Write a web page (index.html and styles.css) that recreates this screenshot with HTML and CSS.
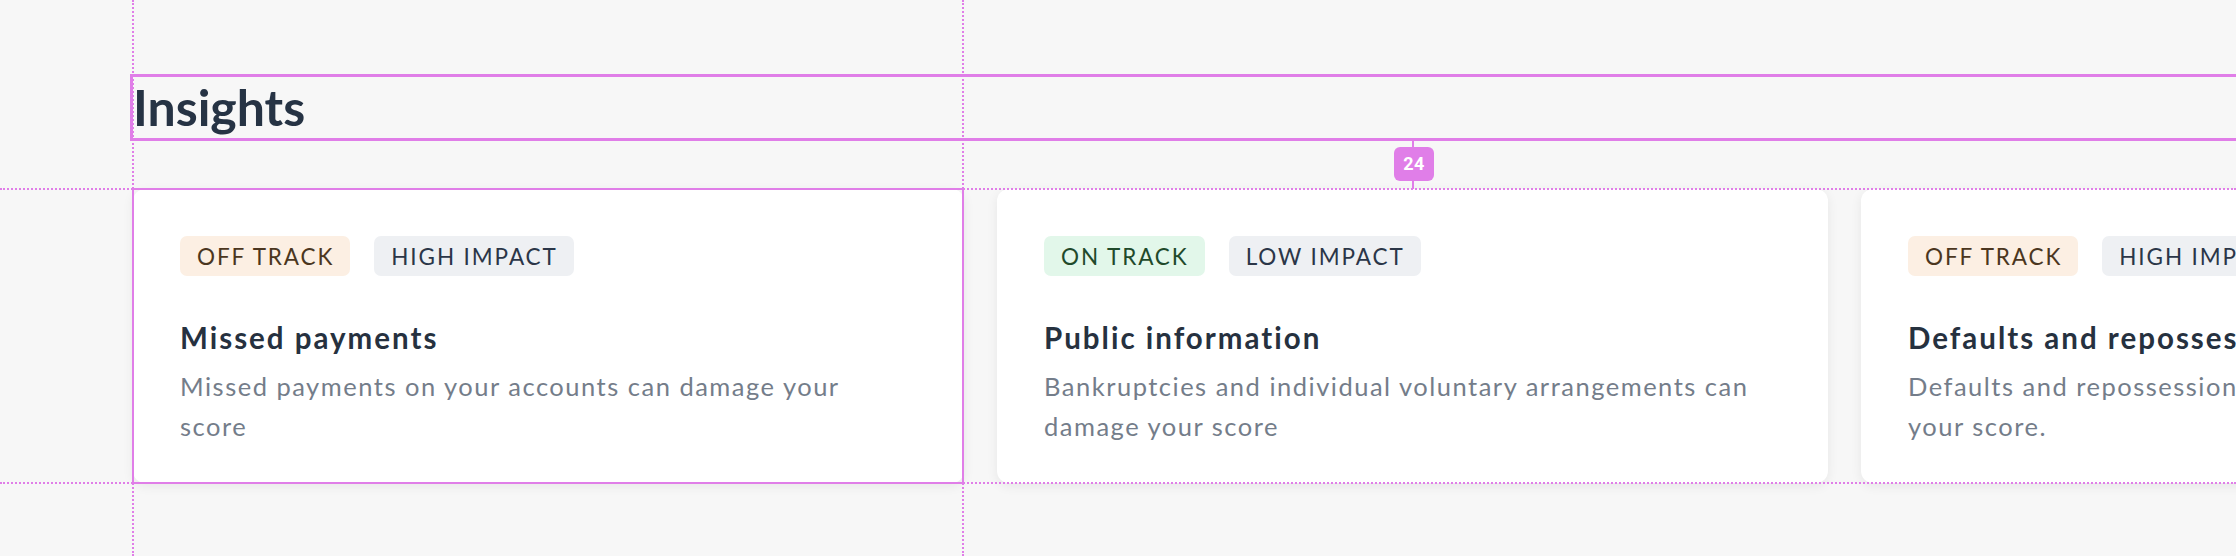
FILE: index.html
```html
<!DOCTYPE html>
<html lang="en">
<head>
<meta charset="utf-8">
<title>Insights</title>
<link rel="stylesheet" href="styles.css">
</head>
<body>
<div class="stage">
  <section class="insights">
    <h1 class="heading">Insights</h1>
    <div class="cards">
      <article class="card">
        <div class="tags">
          <span class="tag tag-off">Off track</span>
          <span class="tag tag-impact">High impact</span>
        </div>
        <h2 class="card-title">Missed payments</h2>
        <p class="card-desc">Missed payments on your accounts can damage your score</p>
      </article>
      <article class="card">
        <div class="tags">
          <span class="tag tag-on">On track</span>
          <span class="tag tag-impact">Low impact</span>
        </div>
        <h2 class="card-title">Public information</h2>
        <p class="card-desc">Bankruptcies and individual voluntary arrangements can damage your score</p>
      </article>
      <article class="card">
        <div class="tags">
          <span class="tag tag-off">Off track</span>
          <span class="tag tag-impact">High impact</span>
        </div>
        <h2 class="card-title">Defaults and repossessions</h2>
        <p class="card-desc">Defaults and repossessions on your accounts can damage your score.</p>
      </article>
    </div>
  </section>

  <div class="ov ov-vline ov-v1"></div>
  <div class="ov ov-vline ov-v2"></div>
  <div class="ov ov-hline ov-h1"></div>
  <div class="ov ov-hline ov-h2"></div>
  <div class="ov ov-heading-box"></div>
  <div class="ov ov-card-box"></div>
  <div class="ov ov-gap-line"></div>
  <div class="ov ov-gap-badge">24</div>
</div>
</body>
</html>
```
FILE: styles.css
```css
* { box-sizing: border-box; }

html, body {
  margin: 0;
  padding: 0;
  background: #f7f7f7;
  overflow: hidden;
}

body {
  width: 2236px;
  height: 556px;
  font-family: Lato, "Noto Sans", sans-serif;
}

.stage {
  position: relative;
  width: 2236px;
  height: 556px;
  overflow: hidden;
}

.insights {
  padding: 76px 0 0 133px;
}

.heading {
  margin: 0;
  height: 65px;
  font-size: 50px;
  line-height: 62px;
  font-weight: 700;
  color: #263344;
  letter-spacing: 0;
}

.cards {
  display: flex;
  gap: 33px;
  margin-top: 48px;
}

.card {
  flex: none;
  width: 831px;
  height: 294px;
  padding: 47px 40px 36px 47px;
  background: #ffffff;
  border-radius: 12px;
  box-shadow: 0 3px 12px rgba(0, 0, 0, 0.07);
}

.tags {
  display: flex;
  gap: 24px;
}

.tag {
  display: flex;
  align-items: center;
  height: 40px;
  padding: 0 16px 0 17px;
  border-radius: 7px;
  font-size: 22.5px;
  font-weight: 400;
  letter-spacing: 1.9px;
  text-transform: uppercase;
}

.tag-off {
  background: #fcefe3;
  color: #4b3620;
}

.tag-on {
  background: #e2f7ea;
  color: #1f4a2b;
}

.tag-impact {
  background: #eef0f3;
  color: #2b3648;
}

.card-title {
  margin: 44px 0 0;
  font-size: 29.5px;
  line-height: 36px;
  font-weight: 700;
  color: #26313f;
  letter-spacing: 2px;
  white-space: nowrap;
}

.card-desc {
  margin: 10px 0 0;
  max-width: 722px;
  font-size: 25.5px;
  line-height: 40px;
  color: #747d8a;
  letter-spacing: 1.5px;
}

/* design-tool overlay */
.ov { position: absolute; pointer-events: none; }

.ov-vline {
  top: 0;
  width: 0;
  height: 556px;
  border-left: 2px dotted #e07ee8;
}
.ov-v1 { left: 132px; }
.ov-v2 { left: 962px; }

.ov-hline {
  left: 0;
  width: 2236px;
  height: 0;
  border-top: 2px dotted #e07ee8;
}
.ov-h1 { top: 188px; }
.ov-h2 { top: 482px; }

.ov-heading-box {
  left: 130px;
  top: 74px;
  width: 2400px;
  height: 67px;
  border: 3px solid #e07ee8;
}

.ov-card-box {
  left: 132px;
  top: 188px;
  width: 832px;
  height: 296px;
  border: 2px solid #e07ee8;
}

.ov-gap-line {
  left: 1412px;
  top: 141px;
  width: 2px;
  height: 48px;
  background: #e07ee8;
}

.ov-gap-badge {
  left: 1394px;
  top: 147px;
  width: 40px;
  height: 34px;
  border-radius: 6px;
  background: #e07ee8;
  color: #ffffff;
  font-family: Roboto, "Liberation Sans", sans-serif;
  font-size: 18px;
  font-weight: 700;
  line-height: 34px;
  text-align: center;
  letter-spacing: 0.5px;
}
```
